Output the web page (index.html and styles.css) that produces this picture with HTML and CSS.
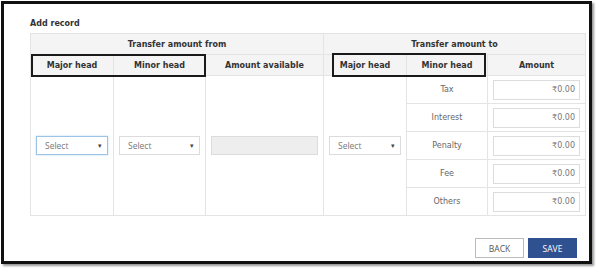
FILE: index.html
```html
<html>
  <head>
    <link rel="stylesheet" href="styles.css">
  </head>
  <body>
    <div class="shot">
      <div class="title">Add record</div>
      <div class="grid-wrap">
        <table class="grid">
          <colgroup>
            <col style="width: 83px">
            <col style="width: 92px">
            <col style="width: 118px">
            <col style="width: 83px">
            <col style="width: 81px">
            <col style="width: 98px">
          </colgroup>
          <tr class="group-row">
            <th colspan="3">Transfer amount from</th>
            <th colspan="3">Transfer amount to</th>
          </tr>
          <tr class="head-row">
            <th>Major head</th>
            <th>Minor head</th>
            <th>Amount available</th>
            <th>Major head</th>
            <th>Minor head</th>
            <th>Amount</th>
          </tr>
          <tr class="body-row">
            <td rowspan="5" class="pick"><div class="select focused">Select<span class="caret">&#9662;</span></div></td>
            <td rowspan="5" class="pick"><div class="select">Select<span class="caret">&#9662;</span></div></td>
            <td rowspan="5" class="pick"><div class="disabled-box"></div></td>
            <td rowspan="5" class="pick"><div class="select">Select<span class="caret">&#9662;</span></div></td>
            <td class="minor">Tax</td>
            <td class="amount"><div class="money">&#8377;0.00</div></td>
          </tr>
          <tr class="body-row">
            <td class="minor">Interest</td>
            <td class="amount"><div class="money">&#8377;0.00</div></td>
          </tr>
          <tr class="body-row">
            <td class="minor">Penalty</td>
            <td class="amount"><div class="money">&#8377;0.00</div></td>
          </tr>
          <tr class="body-row">
            <td class="minor">Fee</td>
            <td class="amount"><div class="money">&#8377;0.00</div></td>
          </tr>
          <tr class="body-row">
            <td class="minor">Others</td>
            <td class="amount"><div class="money">&#8377;0.00</div></td>
          </tr>
        </table>
        <div class="mark mark-from"></div>
        <div class="mark mark-to"></div>
      </div>
      <div class="actions">
        <button class="btn back">BACK</button>
        <button class="btn save">SAVE</button>
      </div>
    </div>
  </body>
</html>
```
FILE: styles.css
```css
body {
  margin: 0;
  background: #fff;
  font-family: 'DejaVu Sans', Verdana, sans-serif;
  color: #333;
}
.shot {
  margin: 1px;
  border: 3px solid #111;
  box-shadow: 2px 2px 2px #999;
  padding: 14px 4px 0 26px;
  width: 555px;
  height: 243px;
}
.title {
  font-size: 8px;
  font-weight: bold;
  line-height: 12px;
  margin-bottom: 3px;
  color: #333;
}
.grid-wrap {
  position: relative;
  width: 555px;
}
.grid {
  border-collapse: collapse;
  table-layout: fixed;
  width: 555px;
}
.grid th,
.grid td {
  border: 1px solid #e4e4e4;
  padding: 0;
  text-align: center;
}
.grid th {
  background: #f4f4f4;
  font-size: 8px;
  font-weight: bold;
  color: #333;
}
.group-row th,
.head-row th {
  height: 21px;
}
.body-row td {
  height: 28px;
}
.pick {
  padding: 0 5px !important;
  vertical-align: middle;
}
.select {
  position: relative;
  height: 17px;
  line-height: 17px;
  border: 1px solid #dcdcdc;
  background: #fff;
  text-align: left;
  padding-left: 8px;
  font-family: 'Open Sans', sans-serif;
  font-size: 8.5px;
  color: #777;
}
.select.focused {
  border-color: #9dc3e6;
  box-shadow: 0 0 2px #b9d6f0;
}
.caret {
  position: absolute;
  right: 5px;
  top: 0;
  font-size: 7px;
  color: #444;
}
.disabled-box {
  height: 17px;
  border: 1px solid #dcdcdc;
  background: #eeeeee;
}
.minor {
  font-size: 8px;
  color: #666;
}
.amount {
  padding: 0 5px !important;
}
.money {
  height: 18px;
  line-height: 18px;
  border: 1px solid #dcdcdc;
  text-align: right;
  padding-right: 4px;
  font-size: 8px;
  color: #777;
}
.mark {
  position: absolute;
  border: 2px solid #1a1a1a;
  box-sizing: border-box;
}
.mark-from {
  left: 1px;
  top: 21px;
  width: 175px;
  height: 23px;
}
.mark-to {
  left: 302px;
  top: 20px;
  width: 154px;
  height: 24px;
}
.actions {
  display: flex;
  justify-content: flex-end;
  gap: 4px;
  margin-top: 22px;
  padding-right: 8px;
}
.btn {
  width: 49px;
  height: 20px;
  font-family: 'Open Sans', sans-serif;
  font-size: 8.5px;
  padding: 0;
  border-radius: 0;
}
.back {
  background: #fff;
  border: 1px solid #bbb;
  color: #555;
}
.save {
  background: #2f5190;
  border: 1px solid #2f5190;
  color: #fff;
}
```
